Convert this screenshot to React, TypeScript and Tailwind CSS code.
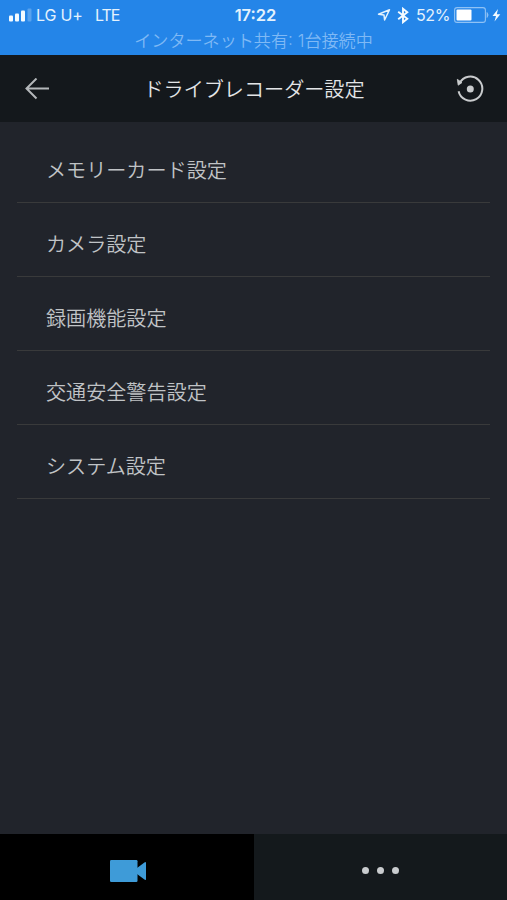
const rows = ['メモリーカード設定', 'カメラ設定', '録画機能設定', '交通安全警告設定', 'システム設定'];

function StatusBar() {
  return (
    <div className="h-[55px] shrink-0 bg-[#2485e8] text-[#e4f2fd] font-['Inter','Noto_Sans_CJK_JP',sans-serif]">
      <div className="grid h-[30px] grid-cols-3 items-center">
        <div className="flex items-center pl-[9px] text-base leading-none tracking-[-0.2px]">
          <svg width="23" height="14" viewBox="0 0 23 14" className="mr-[4px] shrink-0" fill="#f3faff">
            <rect x="0" y="7.5" width="4" height="6" rx="1" />
            <rect x="6" y="5.5" width="4" height="8" rx="1" />
            <rect x="12" y="2.5" width="4" height="11" rx="1" />
            <rect x="18.5" y="0.5" width="4" height="13" rx="1" opacity=".25" />
          </svg>
          <span className="w-[59px] whitespace-nowrap">LG U+</span>
          <span className="tracking-[-1px]">LTE</span>
        </div>
        <span className="pl-1 text-center text-[16.5px] font-semibold leading-none">17:22</span>
        <div className="flex items-center justify-end pr-[6px] leading-none">
          <svg width="14" height="14" viewBox="0 0 14 14" className="mr-[6px]" fill="none" stroke="#e4f2fd" strokeWidth="1.5" strokeLinejoin="round">
            <path d="M1.5 6.2 12.5 1.8 7.6 12 7 7Z" />
          </svg>
          <svg width="12" height="17" viewBox="0 0 12 17" className="mr-[7px]" fill="none" stroke="#f3faff" strokeWidth="1.9">
            <path d="M1.2 4.7 10.3 11.7 6 15.2V1.8L10.3 5.3 1.2 12.3" />
          </svg>
          <span className="mr-1 text-base tracking-[-0.4px]">52%</span>
          <svg width="47" height="16" viewBox="0 0 47 16" fill="none">
            <rect x=".6" y=".6" width="30.8" height="14.8" rx="2.5" stroke="#8fc2f5" strokeWidth="1.1" />
            <rect x="2.5" y="2.5" width="15" height="11" rx="1" fill="#fff" />
            <path d="M33 5.5Q35.3 8 33 10.5Z" fill="#8fc2f5" stroke="#8fc2f5" strokeWidth=".7" />
            <path d="M44 2 38.5 9H42L40.5 14.5 46.3 7.2H42.8Z" fill="#f3faff" />
          </svg>
        </div>
      </div>
      <div className="flex h-[22px] items-center justify-center whitespace-pre text-[17.1px] font-[350] leading-none text-[#7fb9f5]">
        インターネット共有: 1台接続中
      </div>
    </div>
  );
}

export default function App() {
  return (
    <div className="flex h-[900px] w-[507px] flex-col overflow-hidden bg-[#21242b] font-['Noto_Sans_CJK_JP',sans-serif]">
      <StatusBar />
      <header className="flex h-[67px] shrink-0 items-center justify-between bg-[#14181c] pl-[25px] pr-[23px]">
        <svg width="24" height="22" viewBox="0 0 24 22" fill="none" stroke="#b4b7ba" strokeWidth="2">
          <path d="M24 10.5H1.5M11.5 .5 1.5 10.5 11.5 20.5" />
        </svg>
        <h1 className="pl-[3px] pt-[2px] text-[20.1px] font-[350] leading-none text-[#e3e5e7]">ドライブレコーダー設定</h1>
        <svg width="28" height="28" viewBox="0 0 28 28" fill="none" stroke="#c9cbcd" strokeWidth="2">
          <path d="M3.6 8.2A12 12 0 1 1 2.6 16.2" />
          <path d="M1.3 4.3 2.2 10.2 6 7.6Z" fill="#c9cbcd" strokeWidth=".8" />
          <circle cx="14.3" cy="14" r="3.5" fill="#c9cbcd" stroke="none" />
        </svg>
      </header>
      <main className="flex-1 px-[17px] pt-[7px]">
        {rows.map((row) => (
          <div key={row} className="flex h-[74px] items-center border-b border-[#393a3b] pl-[29px] pt-[10px] text-[20.1px] font-[350] leading-none text-[#c0c3c6]">
            {row}
          </div>
        ))}
      </main>
      <nav className="grid h-[66px] shrink-0 grid-cols-2 bg-[#14191c]">
        <div className="flex items-center justify-center bg-black pl-[2px] pt-[7px]">
          <svg width="36" height="22" viewBox="0 0 36 22" fill="#3e9bd8">
            <rect width="27.5" height="22" rx="1.2" />
            <path d="M27 8 34.8 2.2Q36 1.8 36 3V19Q36 20.5 34.8 19.8L27 14Z" />
          </svg>
        </div>
        <div className="flex items-center justify-center gap-[8px] pt-[7px]">
          <i className="size-[7px] rounded-full bg-[#c9ccce]" />
          <i className="size-[7px] rounded-full bg-[#c9ccce]" />
          <i className="size-[7px] rounded-full bg-[#c9ccce]" />
        </div>
      </nav>
    </div>
  );
}
